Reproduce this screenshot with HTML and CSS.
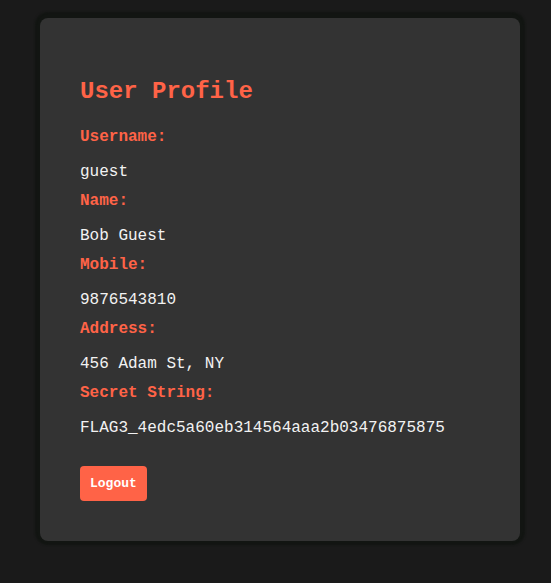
FILE: index.html
```html
<!DOCTYPE html>
<html>
<head>
<meta charset="utf-8">
<title>User Profile</title>
<link rel="stylesheet" href="styles.css">
</head>
<body>
<div class="card">
  <h1 class="title">User Profile</h1>
  <div class="field"><span class="label">Username:</span><p class="value">guest</p></div>
  <div class="field"><span class="label">Name:</span><p class="value">Bob Guest</p></div>
  <div class="field"><span class="label">Mobile:</span><p class="value">9876543810</p></div>
  <div class="field"><span class="label">Address:</span><p class="value">456 Adam St, NY</p></div>
  <div class="field"><span class="label">Secret String:</span><p class="value">FLAG3_4edc5a60eb314564aaa2b03476875875</p></div>
  <button class="logout">Logout</button>
</div>
</body>
</html>
```
FILE: styles.css
```css
html, body {
  margin: 0;
  padding: 0;
  background: #1a1a1a;
  font-family: "Liberation Mono", "Courier New", monospace;
}
body {
  padding: 18px 0 42px 40px;
}
.card {
  width: 400px;
  padding: 40px;
  background: #333333;
  border-radius: 8px;
  box-shadow: 0 -1px 2px 5px #121512;
}
.title {
  margin: 20px 0 23px;
  font-size: 24px;
  font-weight: bold;
  color: #ff6347;
  line-height: normal;
}
.field {
  margin: 0 0 11px;
}
.label {
  display: block;
  font-size: 16px;
  font-weight: bold;
  color: #ff6347;
  margin-bottom: 17px;
}
.value {
  margin: 0;
  font-size: 16px;
  color: #f2f2f2;
}
.logout {
  display: block;
  margin-top: 29px;
  padding: 10px;
  font-family: "Liberation Mono", "Courier New", monospace;
  font-size: 13px;
  font-weight: bold;
  line-height: 15px;
  color: #ffffff;
  background: #ff6347;
  border: none;
  border-radius: 4px;
}
```
